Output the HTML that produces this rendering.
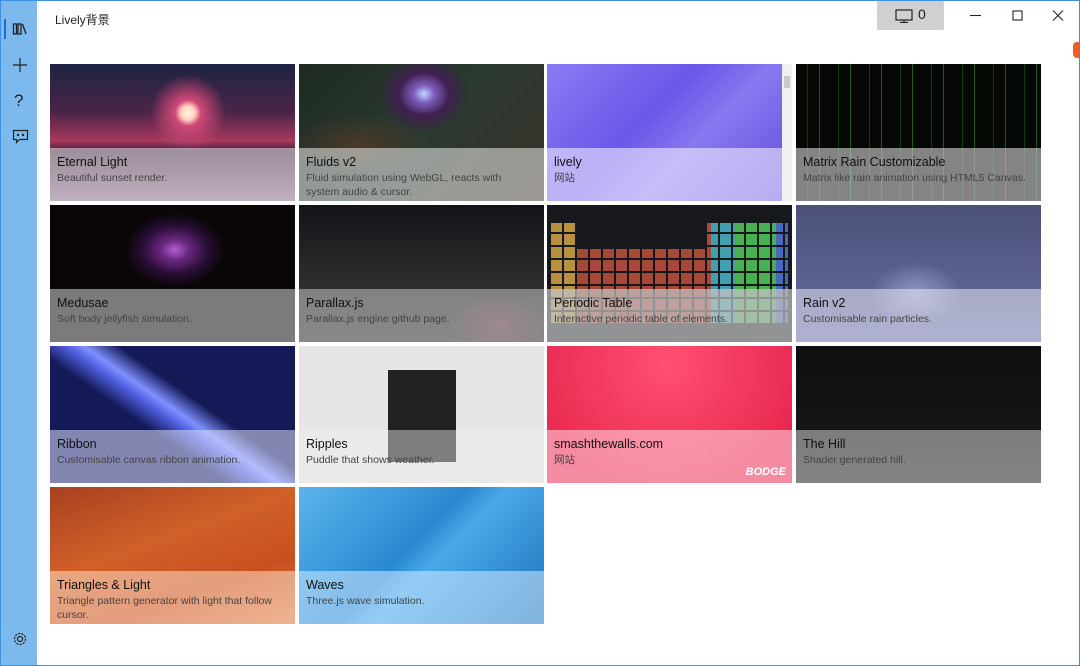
<!DOCTYPE html>
<html><head><meta charset="utf-8"><style>
*{margin:0;padding:0;box-sizing:border-box}
body{width:1080px;height:666px;overflow:hidden;background:#fff;font-family:"Liberation Sans","Noto Sans CJK SC",sans-serif;position:relative}
.tb{position:absolute;left:0;top:0;width:1080px;height:1px;background:#3d8fe0}
.side{position:absolute;left:0;top:0;width:37px;height:666px;background:#7cb9ec;border-left:1px solid #3d8fe0}
.rb{position:absolute;right:0;top:0;width:1px;height:666px;background:#3d8fe0}
.bb{position:absolute;left:0;bottom:0;width:1080px;height:1px;background:#3d8fe0}
.title{position:absolute;left:55px;top:11px;font-size:12px;color:#222}
.mon{position:absolute;left:877px;top:1px;width:67px;height:29px;background:#d0d0d0;border-radius:2px}
.t{position:absolute;width:245px;height:137px;overflow:hidden}
.o{position:absolute;left:0;right:0;top:84px;bottom:0;background:rgba(255,255,255,.5);padding:7px 7px}
.o b{display:block;font-weight:normal;font-size:12.5px;color:#111;line-height:15px}
.o i{display:block;font-style:normal;font-size:10.5px;color:#444;line-height:14px;margin-top:1px}
</style></head><body>
<div class="side">
<div style="position:absolute;left:3px;top:19px;width:2px;height:20px;background:#1a6fd0"></div>
<svg style="position:absolute;left:11px;top:21px" width="16" height="16" viewBox="0 0 16 16" fill="none" stroke="#222" stroke-width="1.3"><rect x="1.5" y="3" width="3" height="10"/><rect x="6" y="3" width="3" height="10"/><path d="M10.5 3l3.5 10"/></svg>
<svg style="position:absolute;left:11px;top:57px" width="16" height="16" stroke="#222" stroke-width="1.2"><path d="M8 1v14M1 8h14"/></svg>
<div style="position:absolute;left:13px;top:91px;font-size:17px;color:#222">?</div>
<svg style="position:absolute;left:11px;top:129px" width="17" height="16" fill="none" stroke="#222" stroke-width="1.2"><path d="M1.5 1.5h14v9h-8l-3 3v-3h-3z"/><circle cx="6" cy="6" r=".6" fill="#222"/><circle cx="11" cy="6" r=".6" fill="#222"/></svg>
<svg style="position:absolute;left:11px;top:631px" width="16" height="16" fill="none" stroke="#222" stroke-width="1.2"><circle cx="8" cy="8" r="2.5"/><circle cx="8" cy="8" r="5.5" stroke-dasharray="2.2 1.2"/></svg>
</div>
<div class="tb"></div>
<div class="title">Lively背景</div>
<div class="mon"><svg style="position:absolute;left:18px;top:8px" width="18" height="14" fill="none" stroke="#222" stroke-width="1.2"><rect x="1" y="1" width="16" height="10"/><path d="M9 11v2M5 13.5h8"/></svg><span style="position:absolute;left:41px;top:5px;font-size:14px;color:#222">0</span></div>
<svg style="position:absolute;left:965px;top:9px" width="110" height="14" stroke="#222" stroke-width="1.1" fill="none"><path d="M5 6.5h11"/><rect x="48" y="2" width="9" height="9"/><path d="M88 1.5l10 10M98 1.5l-10 10"/></svg>
<div style="position:absolute;left:1073px;top:42px;width:7px;height:16px;background:#f06020;border-radius:4px 0 0 4px"></div>

<div class="t" style="left:50px;top:64px;background:radial-gradient(circle at 138px 49px,#fff6e0 0,#ffd0c0 7px,#d04878 13px,transparent 38px),linear-gradient(#1e2444 0,#4a2448 35%,#a8385e 56%,#3a2036 64%,#5a3a58 80%,#806080)"><div class="o"><b>Eternal Light</b><i>Beautiful sunset render.</i></div></div>
<div class="t" style="left:299px;top:64px;background:radial-gradient(ellipse at 125px 30px,#c0d8ff 0,#8060c0 10px,#402050 25px,transparent 45px),radial-gradient(ellipse at 60px 80px,#4a3828,transparent 70px),linear-gradient(135deg,#1e2a22,#2a3a30 50%,#3a3028)"><div class="o"><b>Fluids v2</b><i>Fluid simulation using WebGL, reacts with system audio &amp; cursor.</i></div></div>
<div class="t" style="left:547px;top:64px;background:linear-gradient(135deg,#8a7cf4,#6a58e8 40%,#8878f0 60%,#5c4ad8);">
<div style="position:absolute;right:0;top:0;width:10px;height:137px;background:#f0f0f0"><div style="position:absolute;left:2px;top:12px;width:6px;height:12px;background:#c8c8c8"></div></div>
<div class="o" style="right:10px;background:rgba(240,236,255,.6)"><b>lively</b><i>网站</i></div></div>
<div class="t" style="left:796px;top:64px;background:repeating-linear-gradient(90deg,transparent 0 11px,#0f3a14 11px 12px,transparent 12px 23px,#1a5a20 23px 24px,transparent 24px 31px),#050805"><div class="o" style="background:rgba(200,200,200,.65)"><b>Matrix Rain Customizable</b><i>Matrix like rain animation using HTML5 Canvas.</i></div></div>

<div class="t" style="left:50px;top:205px;background:radial-gradient(ellipse at 125px 45px,#b060d0 0,#6a2880 14px,#2a0e38 32px,transparent 50px),#0a0608"><div class="o" style="background:rgba(200,200,200,.6)"><b>Medusae</b><i>Soft body jellyfish simulation.</i></div></div>
<div class="t" style="left:299px;top:205px;background:radial-gradient(ellipse at 200px 120px,#6a3a50,transparent 50px),linear-gradient(#121418,#2a2a2a 50%,#3a3a40)"><div class="o" style="background:rgba(200,200,200,.55)"><b>Parallax.js</b><i>Parallax.js engine github page.</i></div></div>
<div class="t" style="left:547px;top:205px;background:#16181c">
<div style="position:absolute;left:4px;top:18px;width:237px;height:100px;background:repeating-linear-gradient(90deg,transparent 0 11px,#16181c 11px 13px),repeating-linear-gradient(0deg,transparent 0 11px,#16181c 11px 13px),linear-gradient(90deg,#b89040 0 26px,#a84838 26px 160px,#40a0b0 160px 185px,#48b050 185px 225px,#4868c0 225px)"></div>
<div style="position:absolute;left:30px;top:18px;width:130px;height:26px;background:#16181c"></div>
<div class="o" style="background:rgba(200,200,200,.7)"><b>Periodic Table</b><i>Interactive periodic table of elements.</i></div></div>
<div class="t" style="left:796px;top:205px;background:radial-gradient(ellipse at 120px 90px,#9098c0,transparent 45px),linear-gradient(#4a5078,#6a70a0)"><div class="o" style="background:rgba(230,232,245,.55)"><b>Rain v2</b><i>Customisable rain particles.</i></div></div>

<div class="t" style="left:50px;top:346px;background:linear-gradient(35deg,transparent 40%,#5060e0 48%,#8090ff 52%,transparent 60%),#141a58"><div class="o" style="background:rgba(220,224,250,.55)"><b>Ribbon</b><i>Customisable canvas ribbon animation.</i></div></div>
<div class="t" style="left:299px;top:346px;background:#e6e6e6"><div style="position:absolute;left:89px;top:24px;width:68px;height:92px;background:#222"></div><div class="o" style="background:rgba(240,240,240,.45)"><b>Ripples</b><i>Puddle that shows weather.</i></div></div>
<div class="t" style="left:547px;top:346px;background:radial-gradient(ellipse at 120px 20px,#ff5070,#e82850 80%)"><div class="o" style="background:rgba(255,220,230,.55)"><b>smashthewalls.com</b><i>网站</i></div><div style="position:absolute;right:6px;bottom:5px;color:#fff;font:italic bold 11px 'Liberation Sans',sans-serif">BODGE</div></div>
<div class="t" style="left:796px;top:346px;background:linear-gradient(#0e0e10,#151515 60%,#2a2a2a)"><div class="o" style="background:rgba(180,180,180,.65)"><b>The Hill</b><i>Shader generated hill.</i></div></div>

<div class="t" style="left:50px;top:487px;background:linear-gradient(160deg,#a84020,#d06028 40%,#c85020 70%,#e07a40)"><div class="o" style="background:rgba(255,235,220,.5)"><b>Triangles &amp; Light</b><i>Triangle pattern generator with light that follow cursor.</i></div></div>
<div class="t" style="left:299px;top:487px;background:linear-gradient(135deg,#5ab4ec,#2a88d0 45%,#4aa8e8 55%,#1c70b8)"><div class="o" style="background:rgba(210,235,255,.55)"><b>Waves</b><i>Three.js wave simulation.</i></div></div>
<div class="rb"></div><div class="bb"></div>
</body></html>
